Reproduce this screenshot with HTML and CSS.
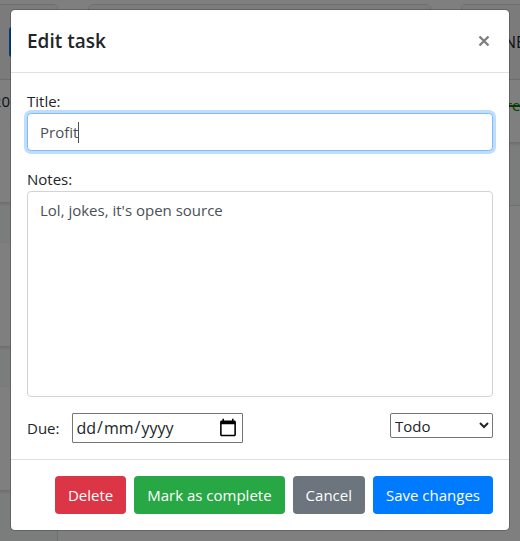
FILE: index.html
```html
<!DOCTYPE html>
<html lang="en-GB">
<head>
<meta charset="utf-8">
<meta name="viewport" content="width=device-width, initial-scale=1">
<title>Edit task</title>
<link rel="stylesheet" href="styles.css">
</head>
<body>
<main class="board" aria-hidden="true">
  <section class="column column-long">
    <header class="column-header"><span class="add-button"></span></header>
    <div class="task task-tall"><span class="task-date">20</span></div>
    <div class="task"></div>
    <div class="task"></div>
    <div class="column-rest"></div>
  </section>
  <section class="column"><header class="column-header"></header></section>
  <section class="column">
    <header class="column-header"><h2 class="column-title">DONE</h2></header>
    <div class="task task-short"><span class="task-done">Share</span></div>
    <div class="column-rest"></div>
  </section>
</main>
<div class="backdrop">
  <form class="modal" role="dialog" aria-labelledby="modal-title">
    <header class="modal-header">
      <h1 class="modal-title" id="modal-title">Edit task</h1>
      <button class="close" type="button" aria-label="Close">
        <svg class="close-icon" viewBox="0 0 12 12" aria-hidden="true"><path d="M1.5 1.5 10.5 10.5M10.5 1.5 1.5 10.5"/></svg>
      </button>
    </header>
    <div class="modal-body">
      <div class="field">
        <label for="title">Title:</label>
        <input class="control" id="title" type="text" value="Profit" autofocus>
        <span class="caret"></span>
      </div>
      <div class="field">
        <label for="notes">Notes:</label>
        <textarea class="control" id="notes" rows="8">Lol, jokes, it's open source</textarea>
      </div>
      <div class="options">
        <div class="due">
          <label for="due">Due:</label>
          <input class="date" id="due" type="date">
        </div>
        <select class="status" aria-label="Status"><option>Todo</option></select>
      </div>
    </div>
    <footer class="modal-footer">
      <button class="button danger" type="button">Delete</button>
      <button class="button success" type="button">Mark as complete</button>
      <button class="button secondary" type="button">Cancel</button>
      <button class="button primary" type="submit">Save changes</button>
    </footer>
  </form>
</div>
<script src="script.js"></script>
</body>
</html>
```
FILE: script.js
```js
const title = document.getElementById("title");
title.focus();
title.setSelectionRange(title.value.length, title.value.length);
```
FILE: styles.css
```css
* { box-sizing: border-box; }

body {
  margin: 0;
  background: #fff;
  color: #212529;
  font: 15px/24px "Segoe UI", "Open Sans", "Noto Sans", sans-serif;
  overflow: hidden;
}

.board {
  display: flex;
  align-items: flex-start;
  gap: 30px;
  height: 100vh;
  padding-top: 4px;
  margin-left: -285px;
  overflow: hidden;
}

.column {
  flex: 0 0 343px;
  border: 1px solid #dfdfdf;
  border-radius: 4px;
  background: #f7f9f8;
}

.column-long { min-height: 100vh; }

.column-header {
  display: flex;
  align-items: center;
  height: 75px;
  padding: 4px 12px 4px 18px;
  border-bottom: 1px solid #dfdfdf;
  background: #f7f7f7;
}

.add-button {
  width: 36px;
  height: 30px;
  margin-left: auto;
  border-radius: 3px;
  background: #007bff;
}

.column-title {
  margin: 0;
  font-size: 16px;
  font-weight: 500;
}

.task {
  height: 104px;
  margin-bottom: 40px;
  border-bottom: 1px solid #dfdfdf;
  background: #fff;
  box-shadow: 0 1px 3px #0002;
}

.task-tall { height: 123px; padding: 9px 47px; text-align: right; }
.task-short { height: 63px; margin: 0; padding: 13px 18px; }
.task-done { color: green; text-decoration: line-through 2px; }
.column-rest { height: 62px; }

.backdrop {
  position: absolute;
  inset: 0;
  padding: 9px 10px;
  background: rgba(0, 0, 0, .5);
}

.modal {
  max-width: 500px;
  margin: 0 auto;
  border: 1px solid rgba(0, 0, 0, .2);
  border-radius: 5px;
  background: #fff;
  background-clip: padding-box;
}

.modal-header {
  display: flex;
  align-items: center;
  justify-content: space-between;
  padding: 16px;
  border-bottom: 1px solid #dee2e6;
}

.modal-title {
  margin: 0;
  font-size: 19px;
  font-weight: 600;
  line-height: 30px;
}

.close {
  display: flex;
  padding: 3px;
  border: 0;
  background: none;
}

.close-icon {
  width: 12px;
  height: 12px;
  fill: none;
  stroke: #7f7f7f;
  stroke-width: 2.4;
}

.modal-body {
  display: flex;
  flex-direction: column;
  gap: 16px;
  padding: 16px;
}

.field {
  position: relative;
  display: flex;
  flex-direction: column;
}

.control {
  display: block;
  width: 100%;
  padding: 6px 12px;
  border: 1px solid #ced4da;
  border-radius: 4px;
  background: #fff;
  color: #495057;
  font: inherit;
  resize: none;
}

.control:focus {
  border-color: #80bdff;
  outline: 0;
  box-shadow: 0 0 0 3px rgba(0, 123, 255, .25);
}

/* Steady insertion mark after the title's text. */
#title { caret-color: transparent; }
.caret {
  position: absolute;
  bottom: 8px;
  left: 51px;
  width: 1px;
  height: 21px;
  background: #495057;
}

.options {
  display: flex;
  align-items: flex-start;
  justify-content: space-between;
}

.due { display: flex; align-items: center; gap: 13px; }

.date {
  width: 171px;
  height: 30px;
  padding: 1px 2px;
  border: 1px solid #767676;
  border-radius: 1px;
  background: #fff;
  color: #212529;
  font: 16px/24px "Segoe UI", "Open Sans", sans-serif;
}

/* Day first, whatever the browser's locale; the slashes fill the free tracks. */
.date::-webkit-datetime-edit-fields-wrapper {
  display: grid;
  grid-template-columns: repeat(5, max-content);
}
.date::-webkit-datetime-edit-day-field { grid-area: 1 / 1; }
.date::-webkit-datetime-edit-month-field { grid-area: 1 / 3; }
.date::-webkit-datetime-edit-year-field { grid-area: 1 / 5; }
.date::-webkit-calendar-picker-indicator {
  width: 20px;
  height: 20px;
}

.status {
  width: 103px;
  height: 25px;
  border: 1px solid #767676;
  border-radius: 2px;
  background: #fff;
  color: #212529;
  font: inherit;
}

.modal-footer {
  display: flex;
  justify-content: flex-end;
  gap: 8px;
  padding: 16px;
  border-top: 1px solid #dee2e6;
}

.button {
  padding: 7px 13px;
  border: 0;
  border-radius: 4px;
  color: #fff;
  font: inherit;
  font-weight: 500;
  white-space: nowrap;
}

.danger { background: #dc3545; }
.success { background: #28a745; }
.secondary { background: #6c757d; }
.primary { background: #007bff; }
```
